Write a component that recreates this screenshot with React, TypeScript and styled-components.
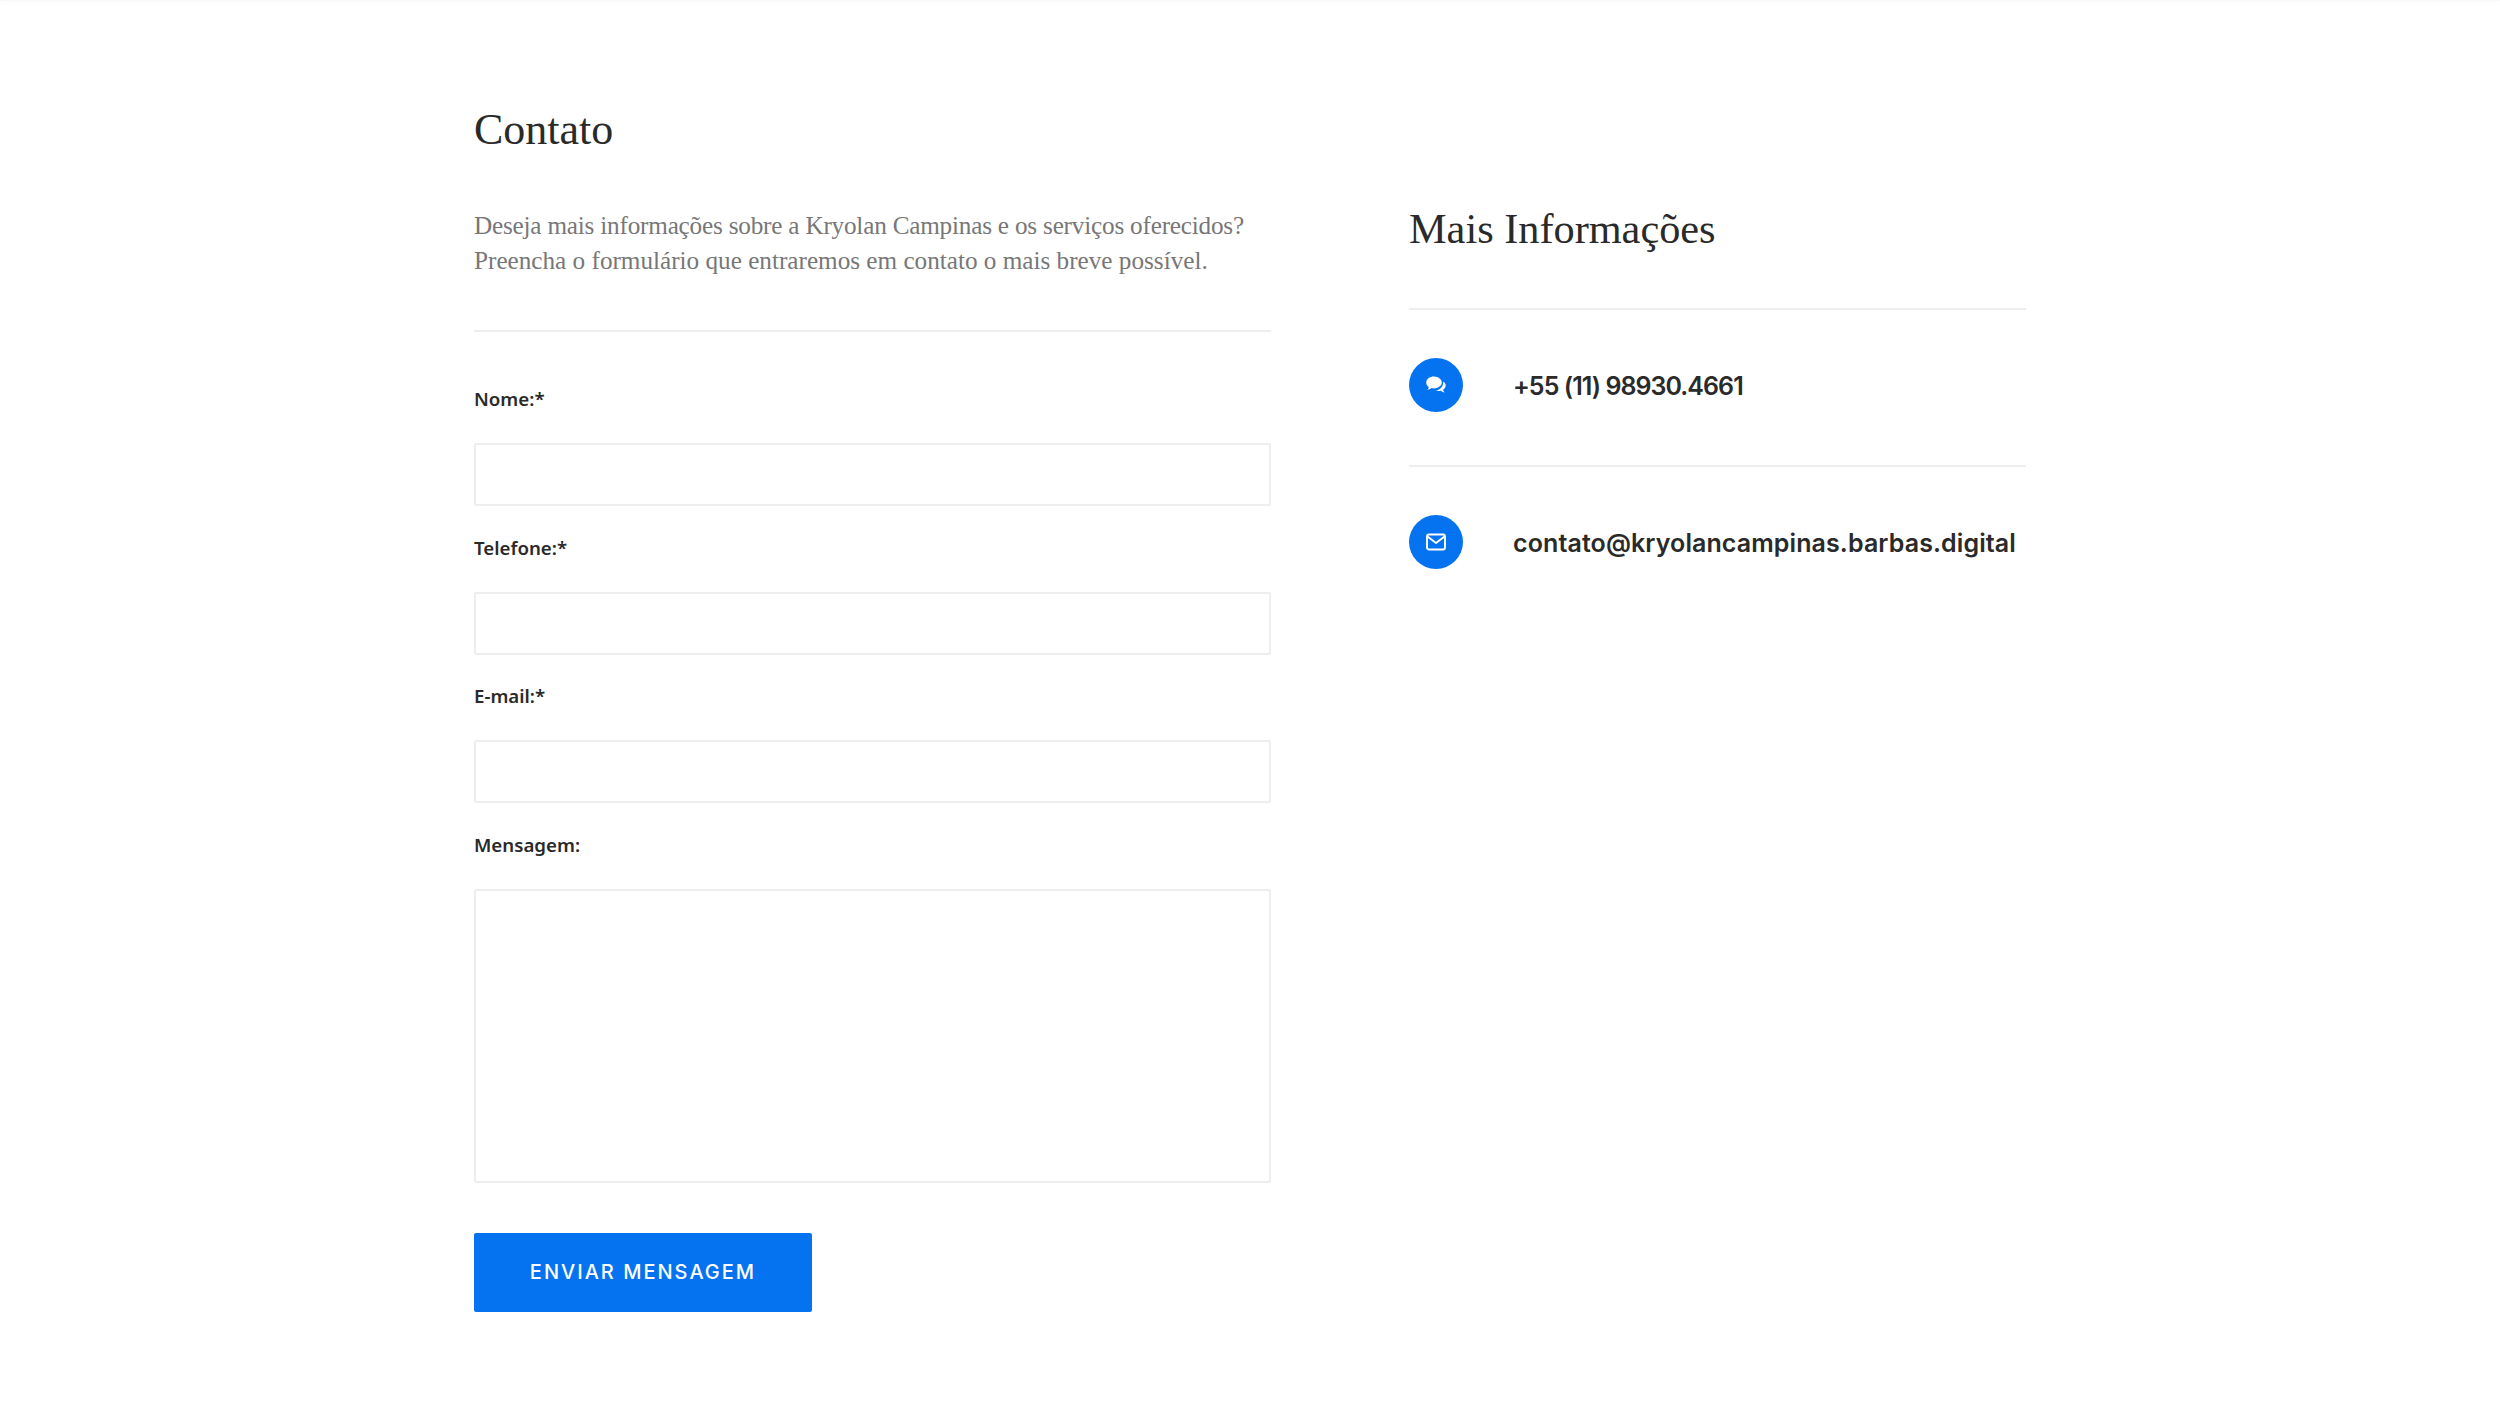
import styled, { createGlobalStyle } from "styled-components";

const GlobalStyle = createGlobalStyle`
  html, body {
    margin: 0;
    padding: 0;
    background: #fff;
  }
  * {
    box-sizing: border-box;
  }
`;

const campos = [
  { id: "nome", label: "Nome:*" },
  { id: "telefone", label: "Telefone:*" },
  { id: "email", label: "E-mail:*" },
];

export default function App() {
  return (
    <>
      <GlobalStyle />
      <TopShadow />
      <Page>
        <Column>
          <Title>Contato</Title>
          <Description>
            <DescriptionLine $spacing={-0.2}>
              Deseja mais informações sobre a Kryolan Campinas e os serviços oferecidos?
            </DescriptionLine>
            <DescriptionLine $spacing={0}>
              Preencha o formulário que entraremos em contato o mais breve possível.
            </DescriptionLine>
          </Description>
          <Divider />
          <Form onSubmit={(e) => e.preventDefault()}>
            {campos.map((campo) => (
              <Field key={campo.id}>
                <Label htmlFor={campo.id}>{campo.label}</Label>
                <Input id={campo.id} type="text" />
              </Field>
            ))}
            <Field>
              <Label htmlFor="mensagem">Mensagem:</Label>
              <TextArea id="mensagem" />
            </Field>
            <SubmitButton type="submit">ENVIAR MENSAGEM</SubmitButton>
          </Form>
        </Column>
        <Aside>
          <AsideTitle>Mais Informações</AsideTitle>
          <InfoRow>
            <IconCircle>
              <svg width="22" height="20" viewBox="0 0 22 20" fill="none">
                <path
                  d="M9 1.5C4.6 1.5 1.2 4.2 1.2 7.6c0 1.9 1 3.5 2.7 4.6-.3 1-.9 1.9-1.7 2.6 1.6-.1 3.1-.7 4.3-1.7.8.2 1.6.3 2.5.3 4.400 0 7.800-2.700 7.800-5.800S13.400 1.500 9 1.500z"
                  fill="#fff"
                />
                <path
                  d="M18.300 6.500c1.500 1 2.400 2.500 2.400 4.100 0 1.700-1 3.200-2.600 4.200.2 1 .8 1.900 1.500 2.600-1.500-.1-2.900-.7-4-1.600-.8.200-1.700.300-2.500.300-1 0-1.900-.2-2.800-.5 3.600-.3 8-2.800 8-9.100z"
                  fill="#fff"
                />
              </svg>
            </IconCircle>
            <InfoText $spacing={-0.95}>+55 (11) 98930.4661</InfoText>
          </InfoRow>
          <InfoRow>
            <IconCircle>
              <svg width="20" height="20" viewBox="0 0 20 20" fill="none" stroke="#fff" strokeWidth="1.900" strokeLinejoin="round">
                <rect x="1" y="2.500" width="18" height="15" rx="2" />
                <path d="M1.500 4.500 10 11l8.500-6.500" />
              </svg>
            </IconCircle>
            <InfoText $spacing={0.1}>contato@kryolancampinas.barbas.digital</InfoText>
          </InfoRow>
        </Aside>
      </Page>
    </>
  );
}

const TopShadow = styled.div`
  height: 1px;
  background: #f8f8f8;
  box-shadow: 0 0 4px rgba(0, 0, 0, 0.08);
`;

const Page = styled.main`
  display: grid;
  grid-template-columns: 797px 617px;
  column-gap: 138px;
  width: 1552px;
  height: 1408px;
  margin-left: 474px;
  padding-top: 103px;
  overflow: hidden;
`;

const Column = styled.section`
  display: flex;
  flex-direction: column;
`;

const Title = styled.h2`
  margin: 0 0 52px;
  font-family: "Liberation Serif", serif;
  font-size: 44px;
  font-weight: 400;
  line-height: 52px;
  color: #2a2a2a;
`;

const Description = styled.p`
  margin: 0 0 52px;
  font-family: "Liberation Serif", serif;
  font-size: 25.2px;
  font-weight: 400;
  line-height: 35px;
  color: #777;
`;

const DescriptionLine = styled.span<{ $spacing: number }>`
  display: block;
  letter-spacing: ${(props) => props.$spacing}px;
`;

const Divider = styled.hr`
  width: 100%;
  height: 2px;
  margin: 0 0 54px;
  border: 0;
  background: #eee;
`;

const Form = styled.form`
  display: flex;
  flex-direction: column;
  gap: 28.67px;
`;

const Field = styled.div`
  display: flex;
  flex-direction: column;
`;

const Label = styled.label`
  margin-bottom: 31px;
  font-family: "Noto Sans", sans-serif;
  font-size: 18.7px;
  font-weight: 600;
  line-height: 26px;
  color: #2a2a2a;
`;

const Input = styled.input`
  width: 100%;
  height: 63px;
  border: 2px solid #eee;
  border-radius: 2px;
  background: #fff;
`;

const TextArea = styled.textarea`
  display: block;
  width: 100%;
  height: 294px;
  border: 2px solid #eee;
  border-radius: 2px;
  background: #fff;
  resize: none;
`;

const SubmitButton = styled.button`
  width: 338px;
  height: 79px;
  margin-top: 21.33px;
  border: 0;
  border-radius: 2px;
  background: #0573f0;
  font-family: "Inter", sans-serif;
  font-size: 20px;
  font-weight: 500;
  letter-spacing: 2px;
  color: #fff;
`;

const Aside = styled.aside`
  padding-top: 99px;
`;

const AsideTitle = styled.h3`
  margin: 0;
  padding-bottom: 53px;
  font-family: "Liberation Serif", serif;
  font-size: 42.3px;
  font-weight: 400;
  line-height: 52px;
  color: #2a2a2a;
`;

const InfoRow = styled.div`
  display: flex;
  align-items: center;
  gap: 50px;
  height: 157px;
  padding-bottom: 5px;
  border-top: 2px solid #eee;
`;

const IconCircle = styled.span`
  display: flex;
  flex: none;
  align-items: center;
  justify-content: center;
  width: 54px;
  height: 54px;
  border-radius: 50%;
  background: #0573f0;
`;

const InfoText = styled.span<{ $spacing: number }>`
  padding-top: 2px;
  font-family: "Inter", sans-serif;
  font-size: 25px;
  font-weight: 600;
  letter-spacing: ${(props) => props.$spacing}px;
  color: #2a2a2a;
`;
